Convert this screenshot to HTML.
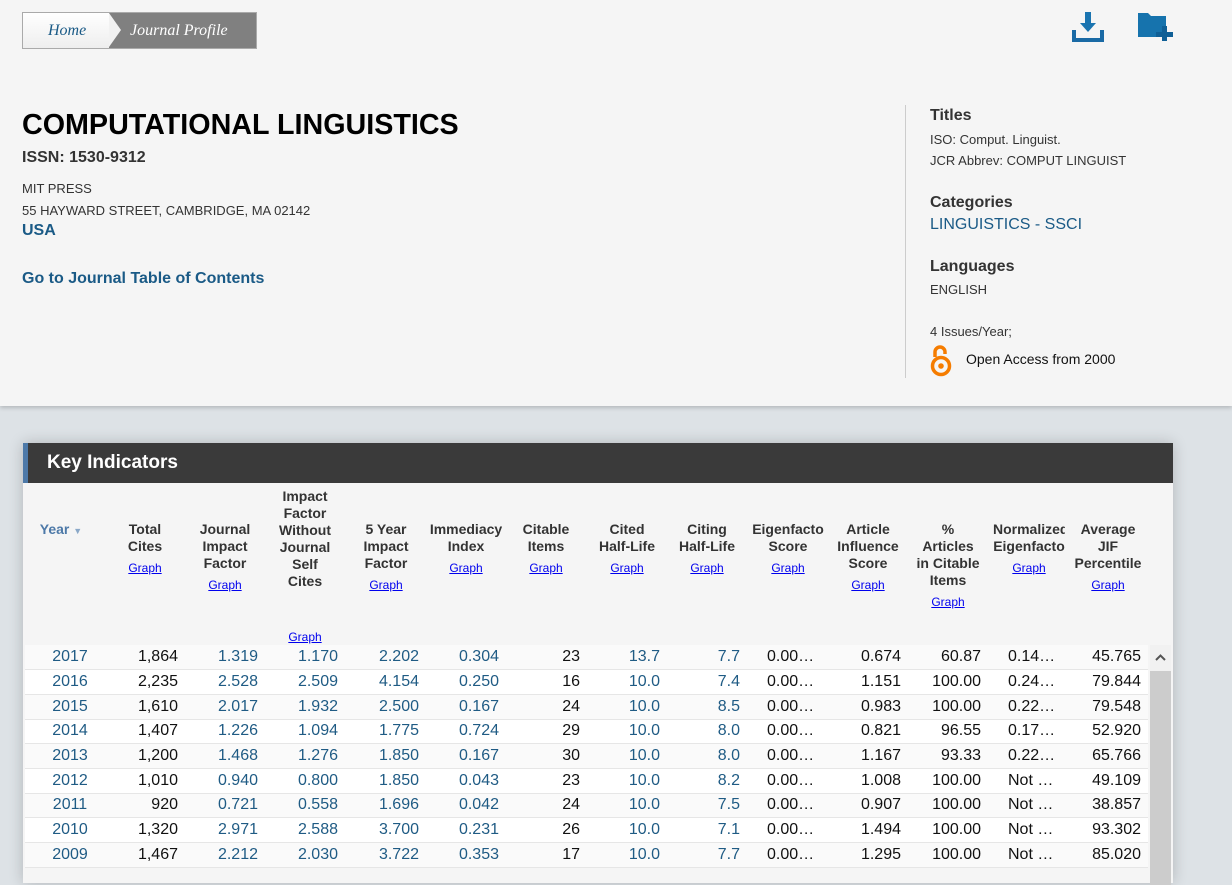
<!DOCTYPE html>
<html><head><meta charset="utf-8"><style>
*{margin:0;padding:0;box-sizing:border-box}
body{width:1232px;height:870px;overflow:hidden;background:#dde2e6;font-family:"Liberation Sans",Arial,sans-serif;position:relative;color:#333}
.top{position:absolute;left:0;top:0;width:1232px;height:406px;background:#f5f5f5;box-shadow:0 2px 4px rgba(0,0,0,.18)}
.a{position:absolute;white-space:nowrap}
.bc{position:absolute;left:22px;top:12px;width:235px;height:37px;border:1px solid #aaa;background:#808080;font-family:"Liberation Serif",serif;font-style:italic;font-size:16px}
.bc .h{position:absolute;left:0;top:0;width:86px;height:35px;background:linear-gradient(#fff,#eee);color:#1a5a86;padding:9px 0 0 25px}
.bc .arr{position:absolute;left:86px;top:0;width:0;height:0;border-top:17.5px solid transparent;border-bottom:17.5px solid transparent;border-left:12px solid #f2f2f2}
.bc .j{position:absolute;left:107px;top:9px;color:#fff}
.blue{color:#1a5a86}
.panel{position:absolute;left:23px;top:443px;width:1150px;height:440px;background:#f5f5f5;box-shadow:0 0 14px rgba(0,0,0,.2)}
.hd{position:absolute;left:0;top:0;width:1150px;height:40px;background:#3a3a3a;border-left:5px solid #4d79a8;color:#fff;font-size:19px;font-weight:bold;padding:9px 0 0 19px}
.hc{position:absolute;width:80px;text-align:center;font-size:14px;font-weight:bold;line-height:17px;color:#333}
.hc a{display:block;font-weight:normal;font-size:12px;color:#00e;text-decoration:underline;margin-top:5px}
table{position:absolute;left:2px;top:202px;border-collapse:collapse;table-layout:fixed;width:1123px;font-size:16px}
td{height:24.7px;border-bottom:1px solid #e6e6e6;text-align:right;padding-right:7px;white-space:nowrap;overflow:hidden;color:#111}
tr:nth-child(odd) td{background:#fafafa}
tr:nth-child(even) td{background:#fff}
td.y{text-align:center;padding-right:0;padding-left:10px}
td.b{color:#1f5b84}
td.e{text-align:left;padding-left:20px;padding-right:0}
.sb{position:absolute;left:1127px;top:202px;width:21px;height:240px;background:#ccc}
.sb div{height:26px;background:#f1f1f1}
</style></head><body>
<div class="top">
<div class="bc"><div class="h">Home</div><div class="arr"></div><div class="j">Journal Profile</div></div>
<svg class="a" style="left:1072px;top:12px" width="32" height="31" viewBox="0 0 32 31"><path d="M13 0h6v11h5l-8 9-8-9h5z" fill="#1a74b0"/><path d="M0 18h4v8h24v-8h4v12H0z" fill="#1a6aa5"/></svg>
<svg class="a" style="left:1138px;top:13px" width="38" height="28" viewBox="0 0 38 28"><path d="M0 0h10l3 3h15v10h-4v6h-6v5H0z" fill="#1673ad"/><path d="M24 13h5v6h6v5h-6v4h-5v-4h-6v-5h6z" fill="#0f5f96"/></svg>
<div class="a" style="left:22px;top:109px;font-size:28.7px;font-weight:bold;color:#000">COMPUTATIONAL LINGUISTICS</div>
<div class="a" style="left:22px;top:149px;font-size:16px;font-weight:bold">ISSN: 1530-9312</div>
<div class="a" style="left:22px;top:181px;font-size:13px">MIT PRESS</div>
<div class="a" style="left:22px;top:203px;font-size:13px">55 HAYWARD STREET, CAMBRIDGE, MA 02142</div>
<div class="a blue" style="left:22px;top:222px;font-size:16px;font-weight:bold">USA</div>
<div class="a blue" style="left:22px;top:270px;font-size:16px;font-weight:bold">Go to Journal Table of Contents</div>
<div class="a" style="left:905px;top:105px;width:1px;height:273px;background:#ccc"></div>
<div class="a" style="left:930px;top:107px;font-size:16px;font-weight:bold">Titles</div>
<div class="a" style="left:930px;top:132px;font-size:13px">ISO: Comput. Linguist.</div>
<div class="a" style="left:930px;top:153px;font-size:13px">JCR Abbrev: COMPUT LINGUIST</div>
<div class="a" style="left:930px;top:194px;font-size:16px;font-weight:bold">Categories</div>
<div class="a blue" style="left:930px;top:216px;font-size:16px">LINGUISTICS - SSCI</div>
<div class="a" style="left:930px;top:258px;font-size:16px;font-weight:bold">Languages</div>
<div class="a" style="left:930px;top:282px;font-size:13px">ENGLISH</div>
<div class="a" style="left:930px;top:324px;font-size:13px">4 Issues/Year;</div>
<svg class="a" style="left:930px;top:343px" width="22" height="34" viewBox="0 0 22 34"><path d="M5 14V9a5 5 0 0 1 10 0v2" fill="none" stroke="#f57c00" stroke-width="3.5"/><circle cx="11" cy="23" r="8.5" fill="none" stroke="#f57c00" stroke-width="3.5"/><circle cx="11" cy="23" r="2.8" fill="#f57c00"/></svg>
<div class="a" style="left:966px;top:351px;font-size:14px;color:#111">Open Access from 2000</div>
</div>
<div class="panel">
<div class="hd">Key Indicators</div>
<div class="hc" style="left:-2px;top:78px;color:#4d79a8;text-align:center">Year <span style="font-size:9px;color:#8aa8c8">&#9660;</span></div>
<div class="hc" style="left:82px;top:78px">Total<br>Cites<a>Graph</a></div>
<div class="hc" style="left:162px;top:78px">Journal<br>Impact<br>Factor<a>Graph</a></div>
<div class="hc" style="left:242px;top:45px">Impact<br>Factor<br>Without<br>Journal<br>Self<br>Cites<a style="margin-top:39px">Graph</a></div>
<div class="hc" style="left:323px;top:78px">5 Year<br>Impact<br>Factor<a>Graph</a></div>
<div class="hc" style="left:403px;top:78px">Immediacy<br>Index<a>Graph</a></div>
<div class="hc" style="left:483px;top:78px">Citable<br>Items<a>Graph</a></div>
<div class="hc" style="left:564px;top:78px">Cited<br>Half-Life<a>Graph</a></div>
<div class="hc" style="left:644px;top:78px">Citing<br>Half-Life<a>Graph</a></div>
<div class="hc" style="left:728px;top:78px;width:74px;overflow:hidden">Eigenfacto<br>Score<a>Graph</a></div>
<div class="hc" style="left:805px;top:78px">Article<br>Influence<br>Score<a>Graph</a></div>
<div class="hc" style="left:885px;top:78px">%<br>Articles<br>in Citable<br>Items<a>Graph</a></div>
<div class="hc" style="left:970px;top:78px;width:72px;overflow:hidden">Normalized<br>Eigenfacto<a>Graph</a></div>
<div class="hc" style="left:1045px;top:78px">Average<br>JIF<br>Percentile<a>Graph</a></div>
<table>
<colgroup><col style="width:80px"><col style="width:80px"><col style="width:80px"><col style="width:80px"><col style="width:81px"><col style="width:80px"><col style="width:81px"><col style="width:80px"><col style="width:80px"><col style="width:81px"><col style="width:80px"><col style="width:80px"><col style="width:80px"><col style="width:80px"></colgroup>
<tr><td class="y b">2017</td><td>1,864</td><td class="b">1.319</td><td class="b">1.170</td><td class="b">2.202</td><td class="b">0.304</td><td>23</td><td class="b">13.7</td><td class="b">7.7</td><td class="e">0.00…</td><td>0.674</td><td>60.87</td><td class="e">0.14…</td><td>45.765</td></tr>
<tr><td class="y b">2016</td><td>2,235</td><td class="b">2.528</td><td class="b">2.509</td><td class="b">4.154</td><td class="b">0.250</td><td>16</td><td class="b">10.0</td><td class="b">7.4</td><td class="e">0.00…</td><td>1.151</td><td>100.00</td><td class="e">0.24…</td><td>79.844</td></tr>
<tr><td class="y b">2015</td><td>1,610</td><td class="b">2.017</td><td class="b">1.932</td><td class="b">2.500</td><td class="b">0.167</td><td>24</td><td class="b">10.0</td><td class="b">8.5</td><td class="e">0.00…</td><td>0.983</td><td>100.00</td><td class="e">0.22…</td><td>79.548</td></tr>
<tr><td class="y b">2014</td><td>1,407</td><td class="b">1.226</td><td class="b">1.094</td><td class="b">1.775</td><td class="b">0.724</td><td>29</td><td class="b">10.0</td><td class="b">8.0</td><td class="e">0.00…</td><td>0.821</td><td>96.55</td><td class="e">0.17…</td><td>52.920</td></tr>
<tr><td class="y b">2013</td><td>1,200</td><td class="b">1.468</td><td class="b">1.276</td><td class="b">1.850</td><td class="b">0.167</td><td>30</td><td class="b">10.0</td><td class="b">8.0</td><td class="e">0.00…</td><td>1.167</td><td>93.33</td><td class="e">0.22…</td><td>65.766</td></tr>
<tr><td class="y b">2012</td><td>1,010</td><td class="b">0.940</td><td class="b">0.800</td><td class="b">1.850</td><td class="b">0.043</td><td>23</td><td class="b">10.0</td><td class="b">8.2</td><td class="e">0.00…</td><td>1.008</td><td>100.00</td><td class="e">Not …</td><td>49.109</td></tr>
<tr><td class="y b">2011</td><td>920</td><td class="b">0.721</td><td class="b">0.558</td><td class="b">1.696</td><td class="b">0.042</td><td>24</td><td class="b">10.0</td><td class="b">7.5</td><td class="e">0.00…</td><td>0.907</td><td>100.00</td><td class="e">Not …</td><td>38.857</td></tr>
<tr><td class="y b">2010</td><td>1,320</td><td class="b">2.971</td><td class="b">2.588</td><td class="b">3.700</td><td class="b">0.231</td><td>26</td><td class="b">10.0</td><td class="b">7.1</td><td class="e">0.00…</td><td>1.494</td><td>100.00</td><td class="e">Not …</td><td>93.302</td></tr>
<tr><td class="y b">2009</td><td>1,467</td><td class="b">2.212</td><td class="b">2.030</td><td class="b">3.722</td><td class="b">0.353</td><td>17</td><td class="b">10.0</td><td class="b">7.7</td><td class="e">0.00…</td><td>1.295</td><td>100.00</td><td class="e">Not …</td><td>85.020</td></tr>
</table>
<div class="sb"><div><svg width="21" height="26" viewBox="0 0 21 26"><path d="M6 15l4.5-4.5L15 15" fill="none" stroke="#555" stroke-width="2"/></svg></div></div>
</div>
</body></html>
